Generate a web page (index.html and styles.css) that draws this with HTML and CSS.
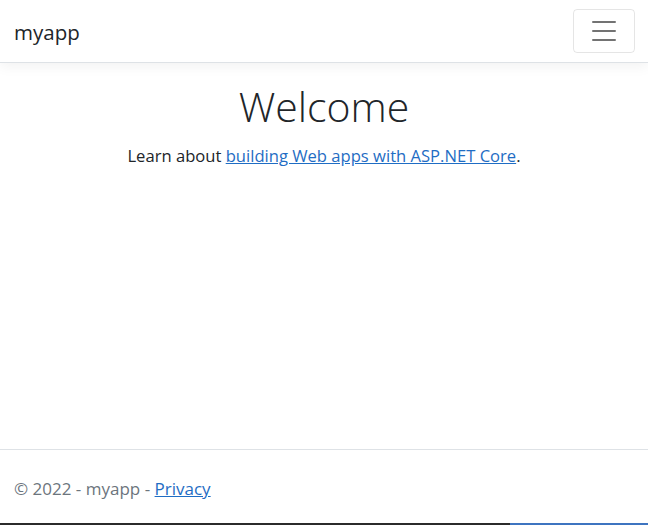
FILE: index.html
```html
<!DOCTYPE html>
<html lang="en">
<head>
<meta charset="utf-8">
<title>myapp</title>
<link rel="stylesheet" href="styles.css">
</head>
<body>
<header class="navbar">
  <a class="brand" href="#">myapp</a>
  <button class="toggler" type="button" aria-label="Toggle navigation">
    <svg class="toggler-icon" viewBox="0 0 30 30" width="30" height="30">
      <path d="M4 6h22M4 15h22M4 24h22" stroke="rgba(0,0,0,0.55)" stroke-width="2" stroke-linecap="round"/>
    </svg>
  </button>
</header>
<main class="main">
  <h1 class="display">Welcome</h1>
  <p class="lead-text">Learn about <a class="link" href="#">building Web apps with ASP.NET Core</a>.</p>
</main>
<footer class="footer">
  <div class="footer-inner">&copy; 2022 - myapp - <a class="link" href="#">Privacy</a></div>
</footer>
<div class="taskbar"><div class="taskbar-dark"></div><div class="taskbar-blue"></div></div>
</body>
</html>
```
FILE: styles.css
```css
* { box-sizing: border-box; }
html, body { margin: 0; padding: 0; }
body {
  height: 525px;
  display: flex;
  flex-direction: column;
  font-family: "Open Sans", "Noto Sans", sans-serif;
  color: #212529;
  background: #fff;
  overflow: hidden;
}
.navbar {
  height: 63px;
  flex: none;
  display: flex;
  align-items: center;
  justify-content: space-between;
  padding: 0 13px 0 14px;
  border-bottom: 1px solid #dee2e6;
  box-shadow: 0 4px 12px rgba(0,0,0,0.05);
  position: relative;
  z-index: 1;
}
.brand {
  font-size: 20.5px;
  color: #212529;
  text-decoration: none;
  margin-top: 1px;
}
.toggler {
  width: 62px;
  height: 44px;
  border: 1px solid rgba(0,0,0,0.1);
  border-radius: 4px;
  background: transparent;
  padding: 0;
  display: flex;
  align-items: center;
  justify-content: center;
}
.toggler-icon { display: block; }
.main {
  flex: 1;
  text-align: center;
  padding-top: 18px;
}
.display {
  margin: 0 0 13px;
  font-weight: 300;
  font-size: 41px;
  line-height: 1.23;
}
.lead-text {
  margin: 0;
  font-size: 16.6px;
  line-height: 1.45;
}
.link { color: #1f6dc4; text-decoration: underline; }
.footer {
  flex: none;
  height: 74px;
  border-top: 1px solid #dee2e6;
  padding: 0 14px;
}
.footer-inner {
  color: #6c757d;
  font-size: 17px;
  line-height: 78px;
  white-space: nowrap;
}
.taskbar { flex: none; height: 2px; display: flex; }
.taskbar-dark { width: 510px; background: #2b2b2b; }
.taskbar-blue { flex: 1; background: #3e74c0; }
```
